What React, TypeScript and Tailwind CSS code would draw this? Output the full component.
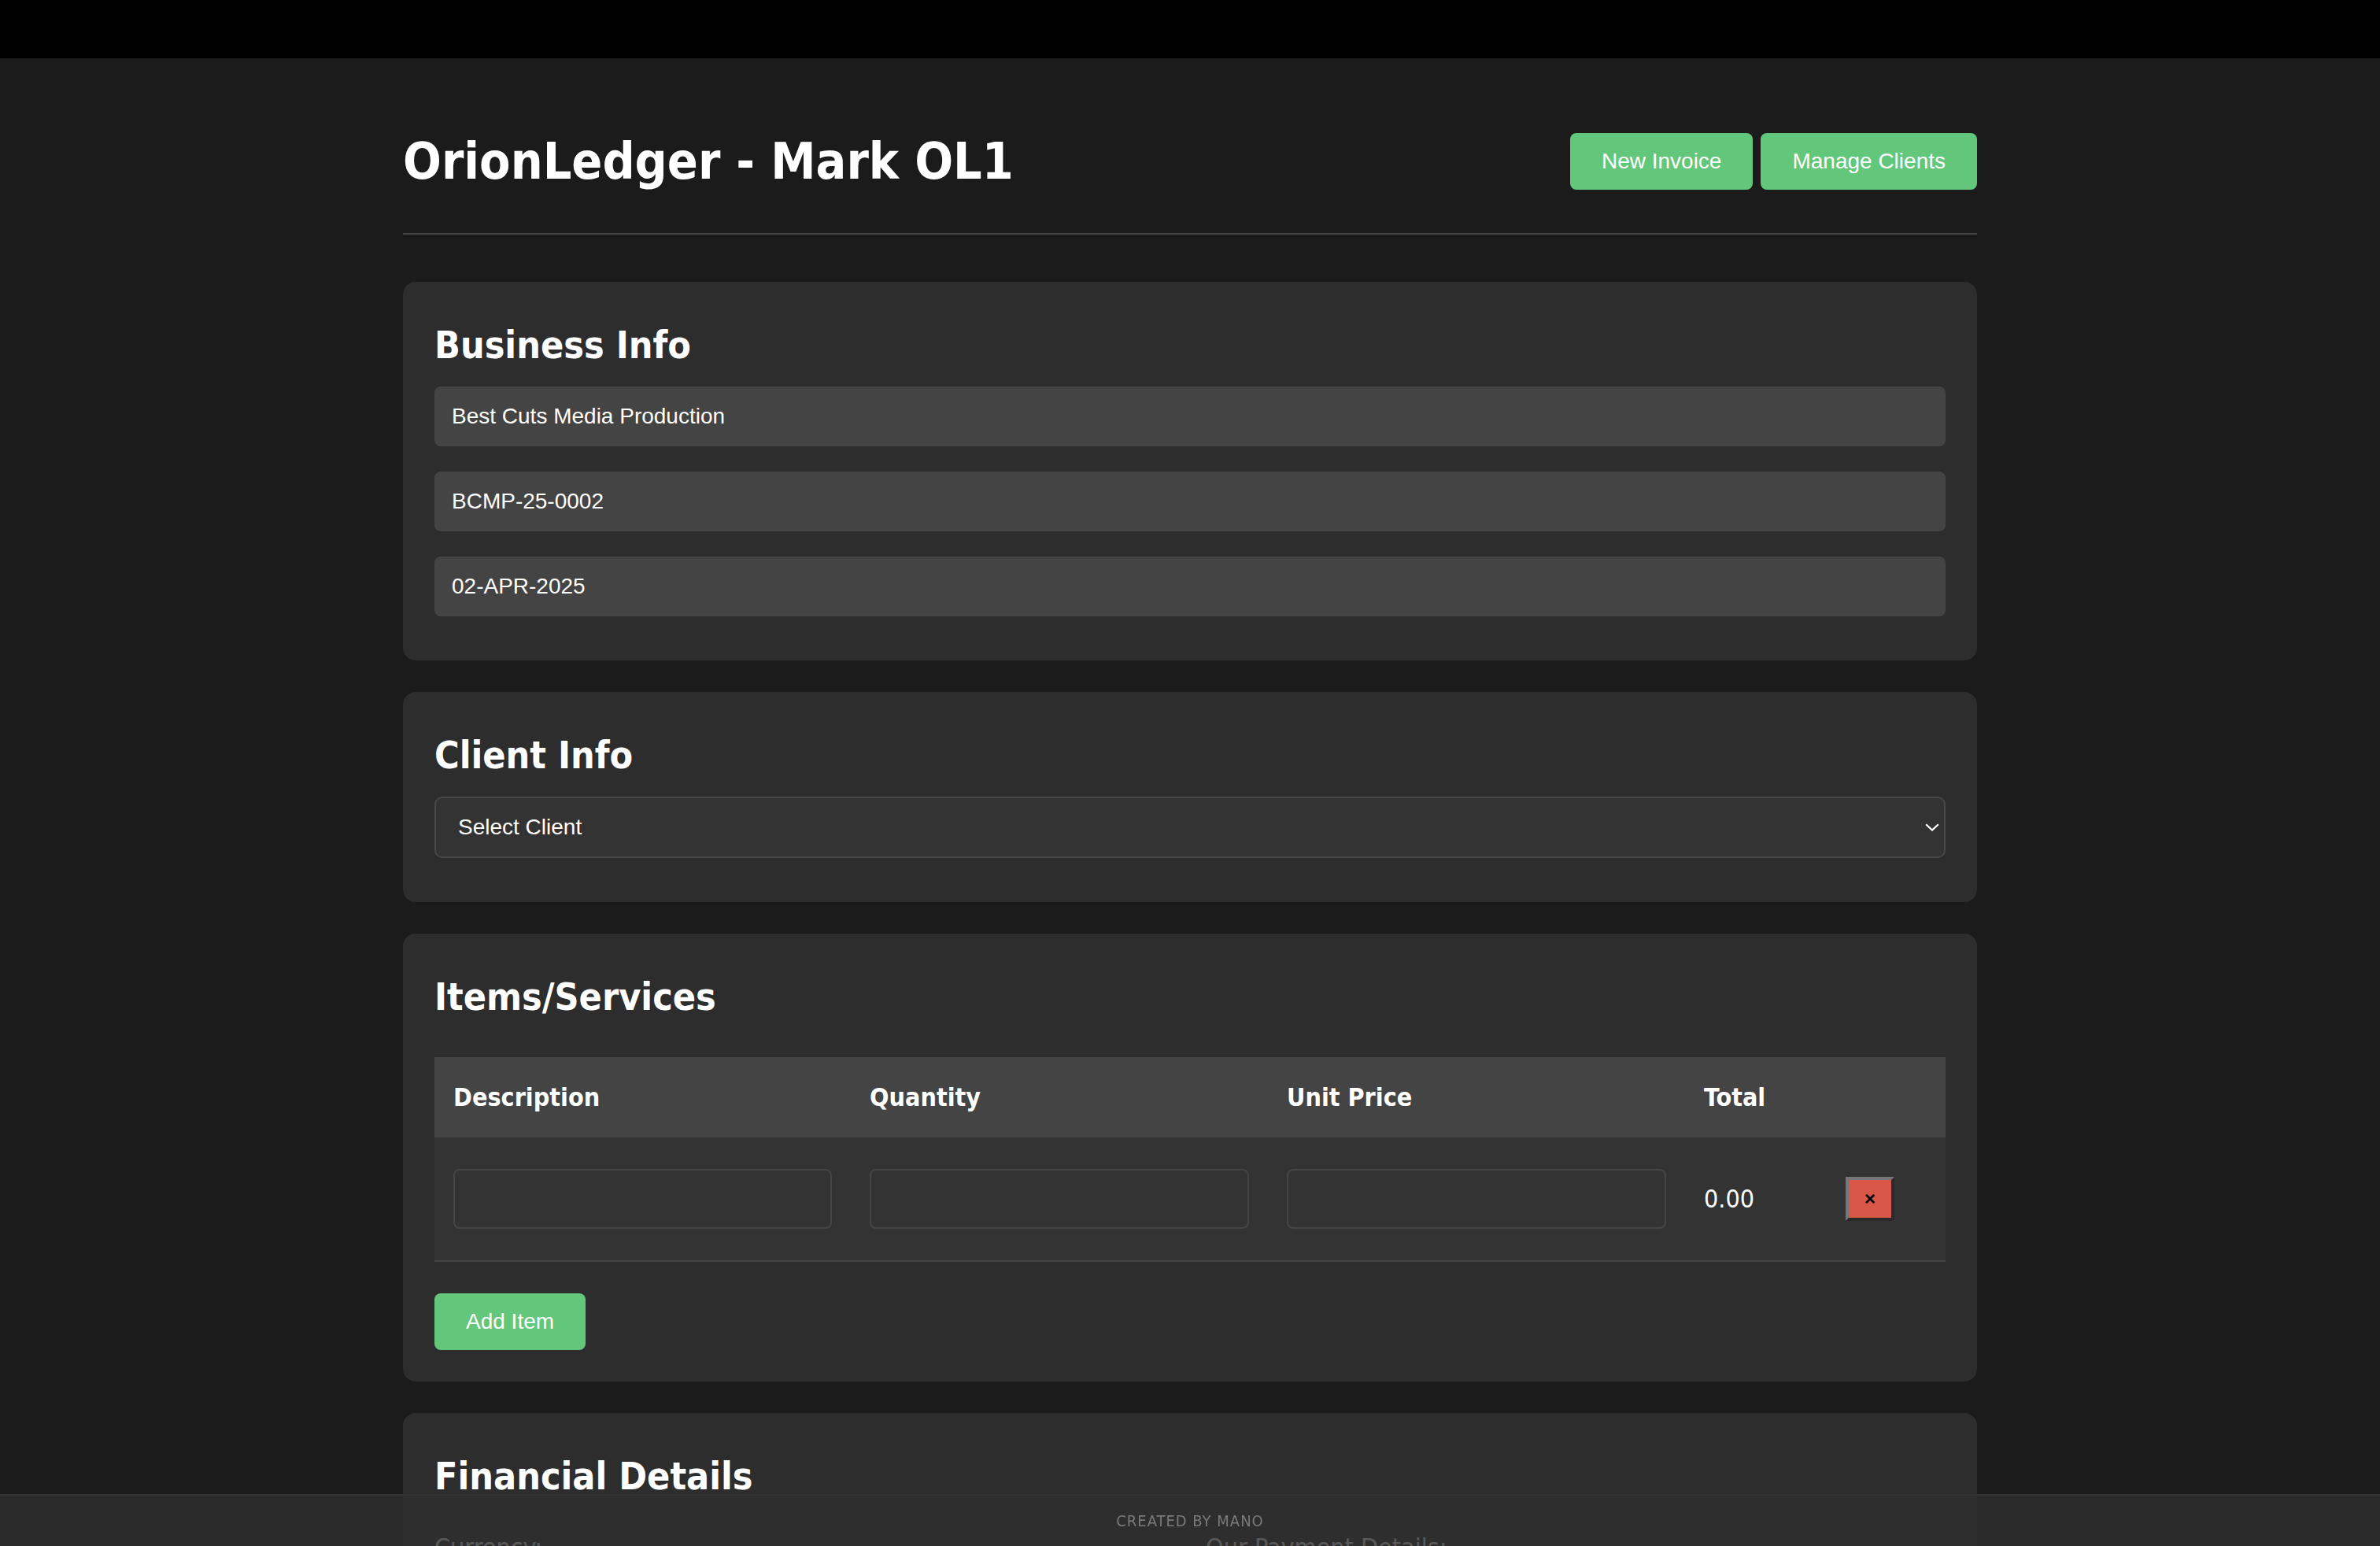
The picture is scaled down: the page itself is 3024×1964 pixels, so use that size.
import React from "react";

function GreenButton({ children }: { children: React.ReactNode }) {
  return (
    <button
      type="button"
      className="h-[36px] rounded-[4px] bg-[#63c77b] px-[20px] font-['Liberation_Sans',Arial,sans-serif] text-[14px] leading-[16px] text-white"
    >
      {children}
    </button>
  );
}

function SectionTitle({ children }: { children: React.ReactNode }) {
  return <h2 className="text-[24px] font-bold leading-[29px] text-white">{children}</h2>;
}

function InfoInput({ value }: { value: string }) {
  return (
    <input
      readOnly
      defaultValue={value}
      className="h-[38px] w-full rounded-[4px] border border-[#444] bg-[#444] px-[10px] font-['Liberation_Sans',Arial,sans-serif] text-[14px] text-white outline-none"
    />
  );
}

function CellInput() {
  return (
    <input
      className="h-[38px] w-full rounded-[4px] border border-[#454545] bg-[#333] px-[10px] font-['Liberation_Sans',Arial,sans-serif] text-[14px] text-white outline-none"
    />
  );
}

export default function App() {
  return (
    <div className="[zoom:2] h-[982px] overflow-hidden bg-[#1b1b1b] font-['DejaVu_Sans_Condensed','DejaVu_Sans',sans-serif] text-white">
      <div className="h-[37px] bg-black" />
      <main className="mx-auto w-[1000px] pt-[20px]">
        <header className="flex h-[92px] items-center justify-between border-b border-[#444]">
          <h1 className="text-[32px] font-bold leading-[39px]">OrionLedger - Mark OL1</h1>
          <div className="flex gap-[5px]">
            <GreenButton>New Invoice</GreenButton>
            <GreenButton>Manage Clients</GreenButton>
          </div>
        </header>

        <section className="mt-[30px] rounded-[8px] bg-[#2d2d2d] px-[20px] pt-[25.5px] pb-[28px]">
          <SectionTitle>Business Info</SectionTitle>
          <div className="mt-[12px] flex flex-col gap-[16px]">
            <InfoInput value="Best Cuts Media Production" />
            <InfoInput value="BCMP-25-0002" />
            <InfoInput value="02-APR-2025" />
          </div>
        </section>

        <section className="mt-[20px] rounded-[8px] bg-[#2d2d2d] px-[20px] pt-[25.5px] pb-[28px]">
          <SectionTitle>Client Info</SectionTitle>
          <div className="relative mt-[12px]">
            <select className="h-[39px] w-full appearance-none rounded-[5px] border border-[#474747] bg-[#333] pl-[14px] font-['Liberation_Sans',Arial,sans-serif] text-[14px] text-white outline-none">
              <option>Select Client</option>
            </select>
            <svg
              className="pointer-events-none absolute top-[17px] right-[4px]"
              width="9"
              height="5"
              viewBox="0 0 9 5"
              fill="none"
            >
              <path d="M0.6 0.6 L4.5 4.3 L8.4 0.6" stroke="white" strokeWidth="1.1" />
            </svg>
          </div>
        </section>

        <section className="mt-[20px] rounded-[8px] bg-[#2d2d2d] px-[20px] pt-[25.5px] pb-[20px]">
          <SectionTitle>Items/Services</SectionTitle>
          <div className="mt-[24px]">
            <div className="grid h-[51px] grid-cols-[264.5px_265px_265px_90px_75.5px] items-center bg-[#444] text-[16px] font-bold">
              <div className="px-[12px]">Description</div>
              <div className="px-[12px]">Quantity</div>
              <div className="px-[12px]">Unit Price</div>
              <div className="px-[12px]">Total</div>
              <div className="px-[12px]" />
            </div>
            <div className="grid grid-cols-[264.5px_265px_265px_90px_75.5px] items-center border-b border-[#444] bg-[#333] py-[20px]">
              <div className="px-[12px]">
                <CellInput />
              </div>
              <div className="px-[12px]">
                <CellInput />
              </div>
              <div className="px-[12px]">
                <CellInput />
              </div>
              <div className="px-[12px] text-[16px]">0.00</div>
              <div className="px-[12px]">
                <button
                  type="button"
                  className="flex h-[28px] w-[31px] items-center justify-center border-2 border-t-[#767676] border-l-[#767676] border-r-[#2a2a2a] border-b-[#2a2a2a] bg-[#d85748] font-['Liberation_Sans',Arial,sans-serif] text-[12px] font-bold leading-none text-black"
                >
                  ×
                </button>
              </div>
            </div>
          </div>
          <div className="mt-[20px]">
            <GreenButton>Add Item</GreenButton>
          </div>
        </section>

        <section className="mt-[20px] rounded-[8px] bg-[#2d2d2d] px-[20px] pt-[25.5px] pb-[28px]">
          <SectionTitle>Financial Details</SectionTitle>
          <div className="mt-[19px] grid grid-cols-2 gap-[20px]">
            <div>
              <div className="text-[16px]">Currency:</div>
              <select className="mt-[8px] h-[39px] w-full appearance-none rounded-[5px] border border-[#474747] bg-[#333] pl-[14px] font-['Liberation_Sans',Arial,sans-serif] text-[14px] text-white outline-none">
                <option>INR</option>
              </select>
            </div>
            <div>
              <div className="text-[16px]">Our Payment Details:</div>
              <textarea className="mt-[8px] h-[80px] w-full rounded-[4px] border border-[#444] bg-[#444] p-[10px] font-['Liberation_Sans',Arial,sans-serif] text-[14px] text-white outline-none" />
            </div>
          </div>
        </section>
      </main>

      <footer className="fixed inset-x-0 bottom-0 flex h-[33px] items-center justify-center border-t border-[#353535] bg-[rgba(46,46,46,0.8)] text-[10px] tracking-[0.5px] text-[#7a7a7a] uppercase">
        Created by Mano
      </footer>
    </div>
  );
}
